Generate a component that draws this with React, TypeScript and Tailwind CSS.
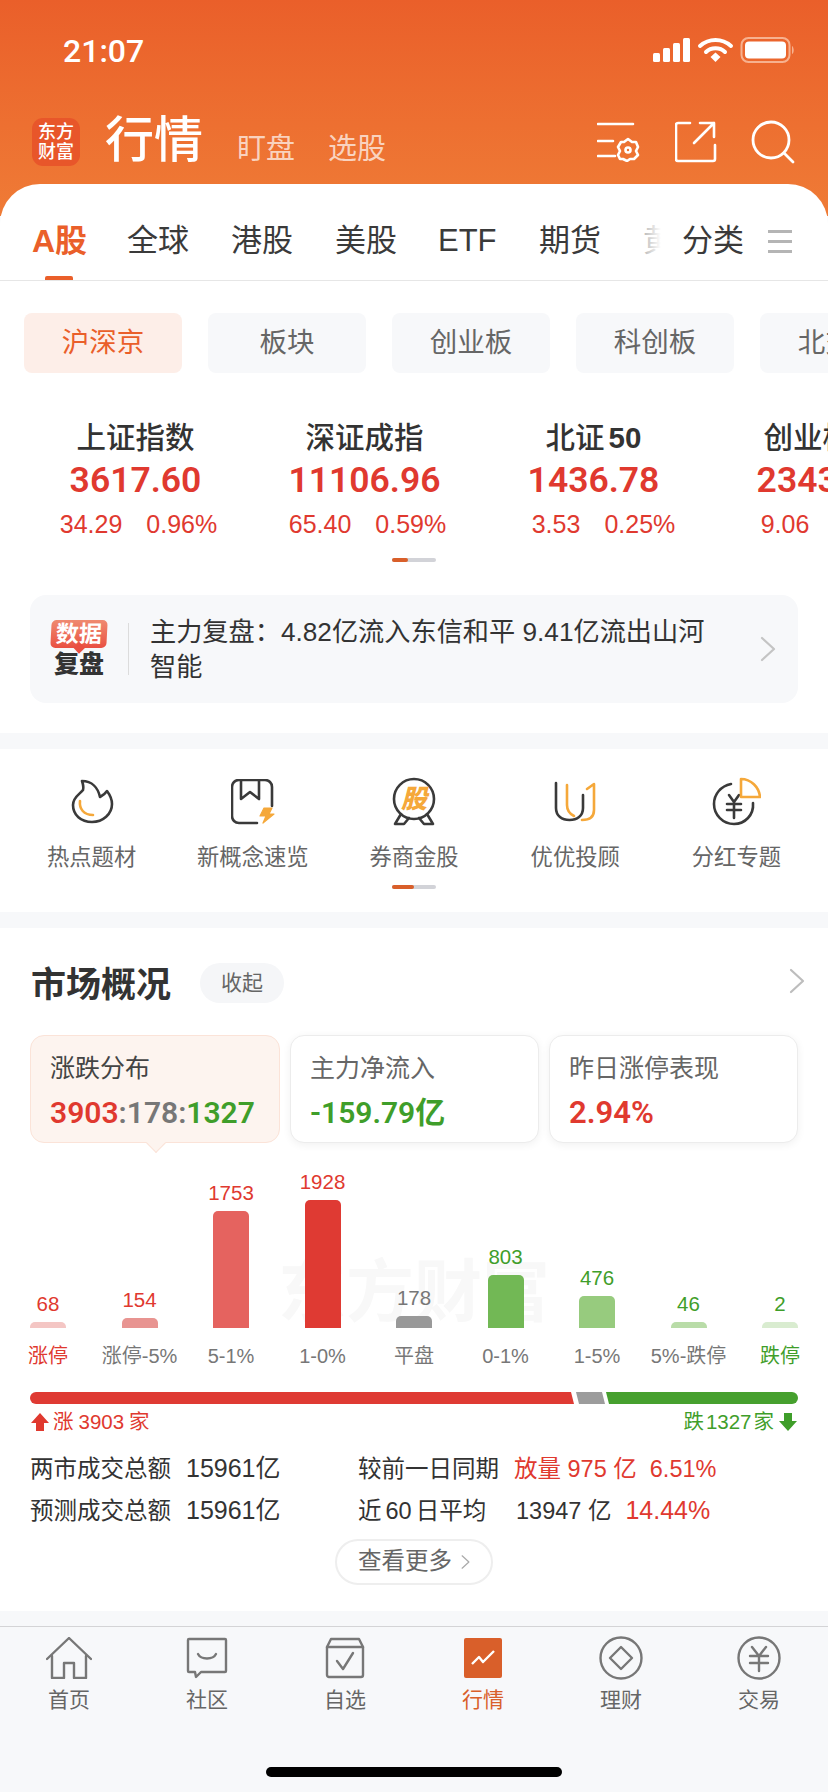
const subTabs = ['板块', '创业板', '科创板', '北交所']

const indices = [
  { name: '上证指数', value: '3617.60', diff: '34.29', pct: '0.96%', shift: 'ml-[6px]' },
  { name: '深证成指', value: '11106.96', diff: '65.40', pct: '0.59%', shift: 'ml-[6px]' },
  { name: '北证', suffix: '50', value: '1436.78', diff: '3.53', pct: '0.25%', shift: 'ml-[20px]' },
  { name: '创业板指', value: '2343.52', diff: '9.06', pct: '0.39%', shift: 'ml-[20px]' },
]

const bars = [
  { value: '68', label: '涨停', h: 'h-[6px]', bar: 'bg-[#f4c6c4]', num: 'text-[#e0392f]', text: 'text-[#e0392f]' },
  { value: '154', label: '涨停-5%', h: 'h-[10px]', bar: 'bg-[#e89491]', num: 'text-[#e0392f]', text: 'text-[#777]' },
  { value: '1753', label: '5-1%', h: 'h-[117px]', bar: 'bg-[#e5635f]', num: 'text-[#e0392f]', text: 'text-[#777]' },
  { value: '1928', label: '1-0%', h: 'h-[128px]', bar: 'bg-[#df3a33]', num: 'text-[#e0392f]', text: 'text-[#777]' },
  { value: '178', label: '平盘', h: 'h-[12px]', bar: 'bg-[#999]', num: 'text-[#777]', text: 'text-[#777]' },
  { value: '803', label: '0-1%', h: 'h-[53px]', bar: 'bg-[#72b855]', num: 'text-[#3f9e2a]', text: 'text-[#777]' },
  { value: '476', label: '1-5%', h: 'h-[32px]', bar: 'bg-[#97cb7e]', num: 'text-[#3f9e2a]', text: 'text-[#777]' },
  { value: '46', label: '5%-跌停', h: 'h-[6px]', bar: 'bg-[#b9dca8]', num: 'text-[#3f9e2a]', text: 'text-[#777]' },
  { value: '2', label: '跌停', h: 'h-[6px]', bar: 'bg-[#d9ecd0]', num: 'text-[#3f9e2a]', text: 'text-[#3f9e2a]' },
]

const dark = '#3a3a3a'
const amber = '#f5a83a'

function FlameIcon() {
  return (
    <svg width="44" height="46" viewBox="0 0 44 46" fill="none" strokeWidth="2.6" strokeLinecap="round" strokeLinejoin="round">
      <path d="M12 2C22 2 28 9 30 18C32 17 35 15 37 12C40 16 42 20 42 25C42 35 33 43 22 43C11 43 3 36 3 26C3 18 10 15 13 11C14 8 13 5 12 2Z" stroke={dark} />
      <path d="M10 22C9 30 14 36 23 36" stroke={amber} />
    </svg>
  )
}

function BookIcon() {
  return (
    <svg width="44" height="46" viewBox="0 0 44 46" fill="none" strokeWidth="2.6" strokeLinecap="round" strokeLinejoin="round">
      <path d="M41 27V8C41 4 38 1 34 1H8C4 1 1 4 1 8V37C1 41 4 44 8 44H26" stroke={dark} />
      <path d="M10 1V20L19 13L28 20V1" stroke={dark} />
      <path d="M33 29H41L38 35H43L32 44L35 37H29Z" stroke={amber} fill={amber} strokeWidth="1.2" />
    </svg>
  )
}

function MedalIcon() {
  return (
    <div className="relative w-[44px] h-[50px]">
      <svg width="44" height="50" viewBox="0 0 44 50" fill="none" strokeWidth="2.6" strokeLinecap="round" strokeLinejoin="round">
        <circle cx="22" cy="22" r="20" stroke={dark} />
        <path d="M9 37L3 47H12L17 41" stroke={dark} />
        <path d="M35 37L41 47H32L27 41" stroke={dark} />
      </svg>
      <span className="absolute left-0 top-[6px] w-[44px] text-center text-[26px] leading-[32px] font-black italic text-[#f5a83a]">股</span>
    </div>
  )
}

function UIcon() {
  return (
    <svg width="44" height="44" viewBox="0 0 44 44" fill="none" strokeWidth="2.6" strokeLinecap="round" strokeLinejoin="round">
      <path d="M3 3V28C3 36 9 40 16.5 40C24 40 30 36 30 28V15" stroke={dark} />
      <path d="M14 5V25C14 30 17 34 21 36" stroke={amber} />
      <path d="M29 40C36 40 41 37 41 30V4L34 9" stroke={amber} />
    </svg>
  )
}

function DividendIcon() {
  return (
    <svg width="50" height="50" viewBox="0 0 50 50" fill="none" strokeWidth="2.6" strokeLinecap="round" strokeLinejoin="round">
      <path d="M20 7C10 9 3 17 3 27C3 38 12 47 23 47C34 47 43 38 42 26" stroke={dark} />
      <path d="M18 18L23 25L28 18M16 27H30M16 33H30M23 25V41" stroke={dark} />
      <path d="M30 2C40 2 48 10 49 20H30Z" stroke={amber} />
    </svg>
  )
}

function Chevron({ className }: { className: string }) {
  return (
    <svg className={className} viewBox="0 0 16 26" fill="none" stroke="currentColor" strokeWidth="2.2" strokeLinecap="round" strokeLinejoin="round">
      <path d="M2 2L14 13L2 24" />
    </svg>
  )
}

export default function App() {
  return (
    <div className="w-[828px] h-[1792px] overflow-hidden flex flex-col bg-[#f7f8fa] font-['Liberation_Sans','Noto_Sans_CJK_SC',sans-serif]">
      {/* orange top */}
      <div className="h-[216px] shrink-0 -mb-[32px] bg-gradient-to-b from-[#ea5f2a] to-[#ef7b36]">
        <div className="h-[100px] flex items-center justify-between pl-[63px] pr-[33px]">
          <span className="mt-[2px] font-['Roboto',sans-serif] text-[32px] font-medium text-white">21:07</span>
          <svg width="142" height="26" viewBox="0 0 142 26" fill="none">
            <rect x="0" y="16" width="7" height="9" rx="1.5" fill="#fff" />
            <rect x="10" y="11" width="7" height="14" rx="1.5" fill="#fff" />
            <rect x="20" y="6" width="7" height="19" rx="1.5" fill="#fff" />
            <rect x="30" y="1" width="7" height="24" rx="1.5" fill="#fff" />
            <path d="M47 9C56 1 69 1 78 9" stroke="#fff" strokeWidth="4" strokeLinecap="round" />
            <path d="M53 15C58 10 67 10 72 15" stroke="#fff" strokeWidth="4" strokeLinecap="round" />
            <path d="M57.5 20L62.5 15.5L67.5 20L62.5 25Z" fill="#fff" />
            <rect x="88.5" y="1" width="48" height="24" rx="7" stroke="#f7b18f" strokeWidth="2" />
            <rect x="92" y="4.5" width="41" height="17" rx="4" fill="#fff" />
            <path d="M139 9C141 10 141.500 16 139 17Z" fill="#f7b18f" />
          </svg>
        </div>
        <div className="h-[84px] flex items-center pl-[32px] pr-[33px]">
          <div className="w-[48px] h-[48px] rounded-[11px] bg-[#e8562a] flex flex-col items-center justify-center text-white text-[18px] leading-[20px] font-medium">
            <span>东方</span>
            <span>财富</span>
          </div>
          <span className="ml-[25px] mb-[5px] text-[49px] font-medium leading-[60px] text-white">行情</span>
          <span className="ml-[34px] mt-[14px] text-[29px] leading-[40px] text-white/70">盯盘</span>
          <span className="ml-[33px] mt-[14px] text-[29px] leading-[40px] text-white/70">选股</span>
          <div className="ml-auto flex items-center gap-[34px]">
            <svg width="44" height="40" viewBox="0 0 44 40" fill="none" stroke="#fff" strokeWidth="2.6" strokeLinecap="round">
              <path d="M1 2H36M1 19H16M1 34H18" />
              <path d="M31 17L35 20H39L41 25L39 29L41 33L37 37H33L30 39L26 37H23L21 33L23 29L21 25L24 20H27Z" strokeLinejoin="round" />
              <circle cx="31" cy="28" r="2.500" />
            </svg>
            <svg width="42" height="42" viewBox="0 0 42 42" fill="none" stroke="#fff" strokeWidth="2.6" strokeLinecap="round" strokeLinejoin="round">
              <path d="M15 2H3A2 2 0 0 0 1 4V38A2 2 0 0 0 3 40H38A2 2 0 0 0 40 38V24" />
              <path d="M19 22L39 2M25 2H39V16" />
            </svg>
            <svg width="44" height="44" viewBox="0 0 44 44" fill="none" stroke="#fff" strokeWidth="2.8" strokeLinecap="round">
              <circle cx="20" cy="20" r="18" />
              <path d="M33 33L42 42" />
            </svg>
          </div>
        </div>
      </div>

      {/* main white panel */}
      <div className="relative bg-white rounded-t-[40px] shrink-0">
        <div className="h-[97px] pt-[18px] flex items-center border-b border-[#e6e6e6] text-[31px] text-[#3a3a3a]">
          <div className="w-[127px] pl-[32px] relative">
            <span className="font-semibold text-[32px] text-[#ea5f2a]">A股</span>
            <div className="absolute left-[45px] -bottom-[15px] w-[28px] h-[4px] rounded-t-[2px] bg-[#ea5f2a]" />
          </div>
          <span className="w-[104px]">全球</span>
          <span className="w-[104px]">港股</span>
          <span className="w-[103px]">美股</span>
          <span className="w-[101px]">ETF</span>
          <span className="w-[104px]">期货</span>
          <div className="relative w-[18px] overflow-hidden whitespace-nowrap">
            <span className="text-[#999]">黄</span>
            <div className="absolute inset-0 bg-gradient-to-r from-white/30 to-white" />
          </div>
          <span className="ml-[21px] w-[62px]">分类</span>
          <div className="ml-[24px] w-[24px] flex flex-col gap-[7px]">
            <div className="h-[3px] bg-[#b5b5b5]" />
            <div className="h-[3px] bg-[#b5b5b5]" />
            <div className="h-[3px] bg-[#b5b5b5]" />
          </div>
        </div>

        <div className="mt-[32px] pl-[24px] flex gap-[26px] overflow-hidden">
          <div className="w-[158px] h-[60px] shrink-0 rounded-[8px] bg-[#fdeee8] text-[#ea5f2a] text-[27.5px] flex items-center justify-center">沪深京</div>
          {subTabs.map(t => (
            <div key={t} className="w-[158px] h-[60px] shrink-0 rounded-[8px] bg-[#f7f8fa] text-[#666] text-[27.5px] flex items-center justify-center">{t}</div>
          ))}
        </div>

        <div className="mt-[47px] pl-[21px] flex overflow-hidden">
          {indices.map(ix => (
            <div key={ix.name} className="w-[229px] shrink-0 flex flex-col items-center whitespace-nowrap">
              <div className="h-[36px] flex items-baseline text-[29.5px] leading-[36px] font-medium text-[#333]">
                <span>{ix.name}</span>
                {ix.suffix && <span className="ml-[4px] font-semibold">{ix.suffix}</span>}
              </div>
              <span className="mt-[2px] h-[44px] font-['Roboto',sans-serif] text-[35.5px] leading-[44px] font-semibold text-[#e0392f]">{ix.value}</span>
              <div className={`mt-[7px] h-[30px] flex gap-[24px] text-[25px] leading-[30px] text-[#e0392f] ${ix.shift}`}>
                <span>{ix.diff}</span>
                <span>{ix.pct}</span>
              </div>
            </div>
          ))}
        </div>

        <div className="mt-[19px] mx-auto w-[44px] h-[4px] rounded-full bg-[#d2d3d8]">
          <div className="w-[16px] h-[4px] rounded-full bg-[#d95f2a]" />
        </div>

        <div className="mt-[33px] mx-[30px] h-[108px] rounded-[16px] bg-[#f7f8fa] flex items-center">
          <div className="ml-[20px] w-[58px] flex flex-col items-center">
            <div className="relative w-[56px] h-[28px] rounded-[5px] bg-gradient-to-b from-[#ef8a70] to-[#e94f42] -skew-x-3 flex items-center justify-center text-[23px] leading-[28px] font-bold text-white">
              数据
              <div className="absolute -bottom-[4px] left-[25px] w-[8px] h-[8px] rotate-45 bg-[#e94f42]" />
            </div>
            <span className="mt-[1px] text-[25px] leading-[30px] font-black text-[#333]">复盘</span>
          </div>
          <div className="ml-[20px] w-px h-[52px] bg-[#dcdcdc]" />
          <div className="ml-[21px] mt-[2px] w-[570px] text-[26.2px] leading-[35px] text-[#333]">主力复盘：4.82亿流入东信和平 9.41亿流出山河智能</div>
          <Chevron className="ml-[40px] w-[16px] h-[26px] text-[#c4c4c4]" />
        </div>

        <div className="mt-[30px] h-[16px] bg-[#f7f8fa]" />

        <div className="h-[163px] pt-[28px] bg-white">
          <div className="px-[11px] grid grid-cols-5">
            {[
              { icon: <FlameIcon />, label: '热点题材' },
              { icon: <BookIcon />, label: '新概念速览' },
              { icon: <MedalIcon />, label: '券商金股' },
              { icon: <UIcon />, label: '优优投顾' },
              { icon: <DividendIcon />, label: '分红专题' },
            ].map(item => (
              <div key={item.label} className="flex flex-col items-center">
                <div className="h-[50px] flex items-center justify-center">{item.icon}</div>
                <span className="mt-[16px] text-[22.3px] leading-[30px] text-[#666] whitespace-nowrap">{item.label}</span>
              </div>
            ))}
          </div>
          <div className="mt-[12px] mx-auto w-[44px] h-[4px] rounded-full bg-[#d2d3d8]">
            <div className="w-[22px] h-[4px] rounded-full bg-[#d95f2a]" />
          </div>
        </div>

        <div className="h-[16px] bg-[#f7f8fa]" />

        {/* market overview */}
        <div className="h-[683px] px-[30px] relative">
          <div className="pt-[35px] h-[107px] flex items-start">
            <span className="ml-[1px] mt-[2px] text-[35px] leading-[40px] font-bold text-[#333]">市场概况</span>
            <div className="ml-[29px] w-[84px] h-[40px] rounded-full bg-[#f5f6f8] text-[21px] text-[#666] flex items-center justify-center">收起</div>
            <Chevron className="ml-auto mt-[5px] mr-[-7px] w-[16px] h-[26px] text-[#bdbdbd]" />
          </div>

          <div className="flex gap-[10px]">
            <div className="relative w-[250px] h-[108px] rounded-[14px] border border-[#fbe3d8] bg-[#fdf4ef] pl-[19px] pt-[16px]">
              <div className="text-[25px] leading-[32px] text-[#444]">涨跌分布</div>
              <div className="mt-[12px] font-['Roboto',sans-serif] text-[30px] leading-[34px] font-semibold text-[#777] whitespace-nowrap">
                <span className="text-[#e0392f]">3903</span>:178:<span className="text-[#3f9e2a]">1327</span>
              </div>
              <div className="absolute left-[118px] -bottom-[8px] w-[14px] h-[14px] rotate-45 border-r border-b border-[#fbe3d8] bg-[#fdf4ef]" />
            </div>
            <div className="w-[249px] h-[108px] rounded-[14px] border border-[#ececec] bg-white shadow-[0_2px_8px_rgba(0,0,0,0.06)] pl-[19px] pt-[16px]">
              <div className="text-[25px] leading-[32px] text-[#666]">主力净流入</div>
              <div className="mt-[12px] font-['Roboto','Noto_Sans_CJK_SC',sans-serif] text-[30px] leading-[34px] font-semibold text-[#3f9e2a]">-159.79亿</div>
            </div>
            <div className="w-[249px] h-[108px] rounded-[14px] border border-[#ececec] bg-white shadow-[0_2px_8px_rgba(0,0,0,0.06)] pl-[19px] pt-[16px]">
              <div className="text-[25px] leading-[32px] text-[#666]">昨日涨停表现</div>
              <div className="mt-[12px] font-['Roboto',sans-serif] text-[31px] leading-[34px] font-semibold text-[#e0392f]">2.94%</div>
            </div>
          </div>

          <div className="relative mt-[12px] h-[173px] flex items-end justify-between">
            <div className="absolute left-[248px] -bottom-[2px] text-[68px] leading-[76px] font-bold text-[#f8f8f8] whitespace-nowrap">东方财富</div>
            {bars.map(b => (
              <div key={b.label} className="relative w-[36px] flex flex-col items-center">
                <span className={`text-[20.5px] leading-[24px] mb-[6px] ${b.num}`}>{b.value}</span>
                <div className={`w-[36px] rounded-t-[5px] ${b.h} ${b.bar}`} />
              </div>
            ))}
          </div>
          <div className="mt-[14px] h-[28px] flex justify-between">
            {bars.map(b => (
              <div key={b.label} className="w-[36px] flex justify-center">
                <span className={`shrink-0 text-[20px] leading-[28px] whitespace-nowrap ${b.text}`}>{b.label}</span>
              </div>
            ))}
          </div>

          <div className="mt-[22px] h-[12px] rounded-full overflow-hidden flex">
            <div className="w-[544px] bg-[#df3a33] [clip-path:polygon(0_0,calc(100%-3px)_0,100%_100%,0_100%)]" />
            <div className="ml-[2px] w-[29px] bg-[#9c9c9c] [clip-path:polygon(0_0,calc(100%-3px)_0,100%_100%,3px_100%)]" />
            <div className="ml-[1px] w-[192px] bg-[#46a02e] [clip-path:polygon(0_0,100%_0,100%_100%,3px_100%)]" />
          </div>
          <div className="mt-[4px] h-[28px] flex items-center justify-between text-[20.5px]">
            <div className="flex items-center text-[#e0392f]">
              <svg width="20" height="20" viewBox="0 0 20 20" fill="#e0392f"><path d="M10 1L19 11H14V19H6V11H1Z" /></svg>
              <span className="ml-[3px]">涨</span>
              <span className="mx-[5px]">3903</span>
              <span>家</span>
            </div>
            <div className="flex items-center text-[#3f9e2a]">
              <span>跌</span>
              <span className="mx-[2px]">1327</span>
              <span className="mr-[4px]">家</span>
              <svg width="20" height="20" viewBox="0 0 20 20" fill="#3f9e2a"><path d="M10 19L19 9H14V1H6V9H1Z" /></svg>
            </div>
          </div>

          <div className="mt-[12px] text-[23.5px] leading-[41px] text-[#333]">
            <div className="flex items-baseline whitespace-nowrap">
              <span className="w-[156px]">两市成交总额</span>
              <span className="w-[172px] text-[25px]">15961亿</span>
              <span className="w-[156px]">较前一日同期</span>
              <span className="text-[#e0392f]">放量 975 亿</span>
              <span className="ml-[13px] text-[#e0392f]">6.51%</span>
            </div>
            <div className="flex items-baseline whitespace-nowrap">
              <span className="w-[156px]">预测成交总额</span>
              <span className="w-[172px] text-[25px]">15961亿</span>
              <span className="w-[156px] flex items-baseline">
                近<span className="mx-[4px]">60</span>日平均
              </span>
              <span className="ml-[2px]">13947 亿</span>
              <span className="ml-[14px] text-[25px] text-[#e0392f]">14.44%</span>
            </div>
          </div>

          <div className="mt-[7px] mx-auto w-[158px] h-[46px] rounded-full border-2 border-[#eeeeee] flex items-center justify-center text-[23.5px] text-[#666]">
            查看更多
            <Chevron className="ml-[9px] w-[9px] h-[16px] text-[#aaa]" />
          </div>
        </div>
      </div>

      {/* bottom tabs */}
      <div className="mt-[15px] border-t border-[#d4d4d6] flex-1 flex flex-col">
        <div className="h-[90px] grid grid-cols-6 pt-[9px]">
          <Tab label="首页">
            <svg width="46" height="42" viewBox="0 0 46 42" fill="none" stroke="#777" strokeWidth="2.4" strokeLinejoin="round" strokeLinecap="round">
              <path d="M1 22L23 1L45 22" />
              <path d="M6 19V41H18V26H28V41H40V19" />
            </svg>
          </Tab>
          <Tab label="社区">
            <svg width="42" height="42" viewBox="0 0 42 42" fill="none" stroke="#777" strokeWidth="2.4" strokeLinejoin="round" strokeLinecap="round">
              <path d="M3 2H39A1 1 0 0 1 40 3V34A1 1 0 0 1 39 35H15L10 40L9 35H3A1 1 0 0 1 2 34V3A1 1 0 0 1 3 2Z" />
              <path d="M12 17C15 23 27 23 30 17" />
            </svg>
          </Tab>
          <Tab label="自选">
            <svg width="40" height="42" viewBox="0 0 40 42" fill="none" stroke="#777" strokeWidth="2.4" strokeLinejoin="round" strokeLinecap="round">
              <path d="M2 10H38V38A2 2 0 0 1 36 40H4A2 2 0 0 1 2 38Z" />
              <path d="M2 10L6 2H34L38 10" />
              <path d="M12 24L18 32L28 16" />
            </svg>
          </Tab>
          <Tab label="行情" active>
            <svg width="38" height="40" viewBox="0 0 38 40" fill="none">
              <rect width="38" height="40" rx="2" fill="#d95f2a" />
              <path d="M8 26L15 19L19 24L30 13" stroke="#fff" strokeWidth="2.4" strokeLinejoin="round" />
            </svg>
          </Tab>
          <Tab label="理财">
            <svg width="44" height="44" viewBox="0 0 44 44" fill="none" stroke="#777" strokeWidth="2.4" strokeLinejoin="round">
              <circle cx="22" cy="22" r="20.500" />
              <path d="M22 11L33 22L22 33L11 22Z" />
            </svg>
          </Tab>
          <Tab label="交易">
            <svg width="44" height="44" viewBox="0 0 44 44" fill="none" stroke="#777" strokeWidth="2.4" strokeLinecap="round" strokeLinejoin="round">
              <circle cx="22" cy="22" r="20.500" />
              <path d="M15 11L22 20L29 11M13 20H31M13 27H31M22 20V35" />
            </svg>
          </Tab>
        </div>
        <div className="mt-[50px] mx-auto w-[296px] h-[10px] rounded-full bg-black" />
      </div>
    </div>
  )
}

function Tab({ label, active, children }: { label: string; active?: boolean; children: React.ReactNode }) {
  return (
    <div className="flex flex-col items-center">
      <div className="h-[44px] flex items-center justify-center">{children}</div>
      <span className={`mt-[6px] text-[21px] leading-[28px] ${active ? 'text-[#d95f2a]' : 'text-[#666]'}`}>{label}</span>
    </div>
  )
}
